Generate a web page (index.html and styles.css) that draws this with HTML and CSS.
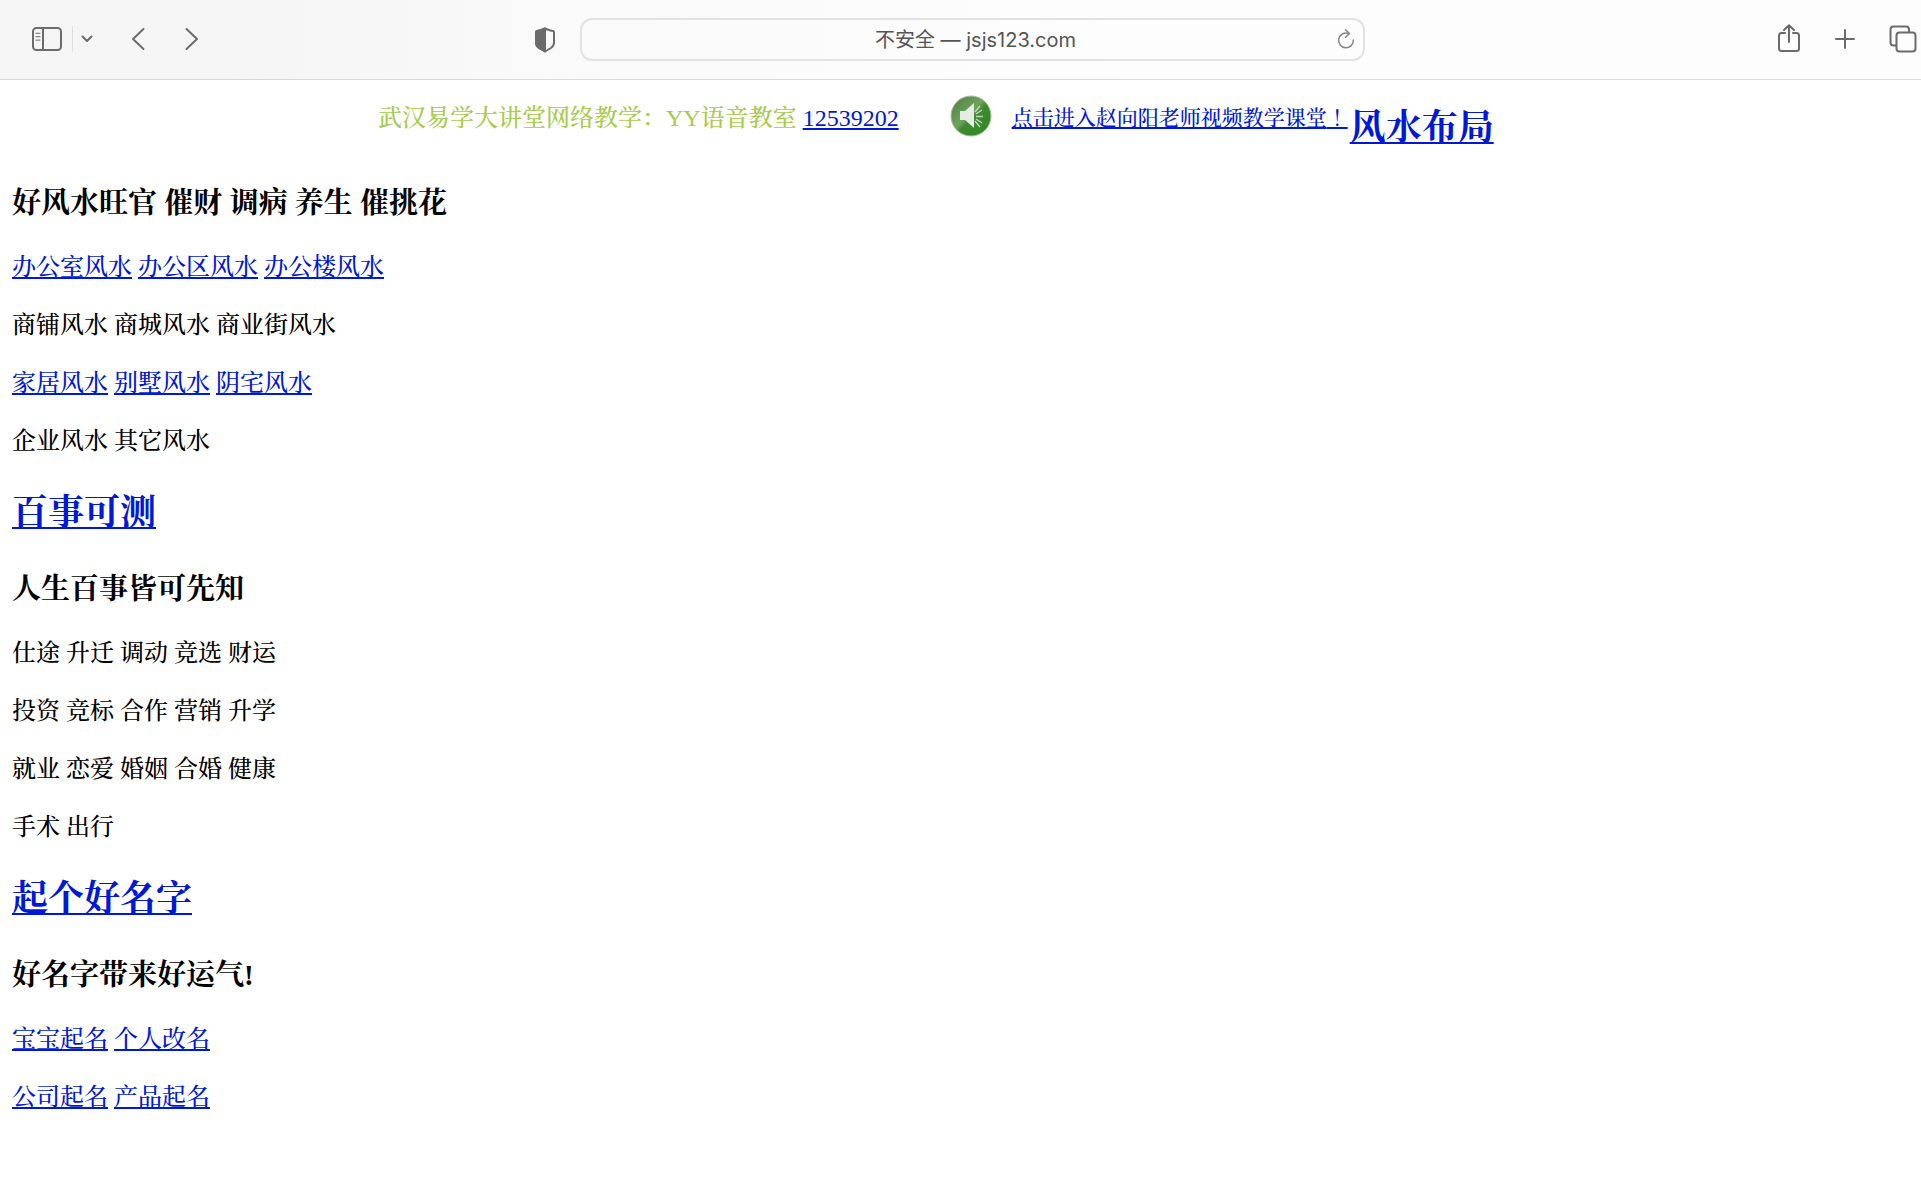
FILE: index.html
```html
<!DOCTYPE html>
<html lang="zh-CN">
<head>
<meta charset="utf-8">
<title>jsjs123.com</title>
<link rel="stylesheet" href="styles.css">
</head>
<body>
<header class="toolbar">
  <div class="tools-left">
    <button class="tool" type="button" aria-label="边栏">
      <svg width="30" height="24" viewBox="0 0 30 24"><rect x="1" y="1" width="28" height="22" rx="3.5"/><path d="M11 1v22"/><path class="thin" d="M4 6.300h4M4 9.700h4M4 13.100h4"/></svg>
    </button>
    <span class="divider"></span>
    <button class="tool tool-menu" type="button" aria-label="标签页组">
      <svg width="12" height="8" viewBox="0 0 12 8"><path d="M1.500 1.500L6 6l4.500-4.500"/></svg>
    </button>
    <button class="tool tool-back" type="button" aria-label="后退">
      <svg width="14" height="24" viewBox="0 0 14 24"><path d="M12.500 2L2 12l10.500 10"/></svg>
    </button>
    <button class="tool tool-forward" type="button" aria-label="前进">
      <svg width="14" height="24" viewBox="0 0 14 24"><path d="M1.500 2L12 12 1.500 22"/></svg>
    </button>
  </div>
  <div class="location">
    <button class="tool" type="button" aria-label="隐私报告">
      <svg width="22" height="26" viewBox="0 0 22 26"><path d="M11 1.500c3 1.200 5.500 2.200 8 2.600q1 .2 1 1.200v10.200q0 3.500-3 5.500l-6 3.500-6-3.500q-3-2-3-5.500V5.300q0-1 1-1.200c2.500-.4 5-1.400 8-2.600z"/><path class="solid" d="M11 1.500v23l-6-3.500q-3-2-3-5.500V5.300q0-1 1-1.200c2.500-.4 5-1.400 8-2.600z"/></svg>
    </button>
    <div class="address">
      <input class="address-input" type="text" aria-label="地址" value="不安全 — jsjs123.com">
      <button class="tool reload" type="button" aria-label="重新载入">
        <svg width="18" height="22" viewBox="0 0 18 22"><path d="M11 4.200A7.400 7.400 0 1 0 16.400 11"/><path d="M8.500 .8l4 3.700-4 3.700"/></svg>
      </button>
    </div>
  </div>
  <div class="tools-right">
    <button class="tool" type="button" aria-label="共享">
      <svg width="24" height="30" viewBox="0 0 24 30"><path d="M8 9H4.500Q2 9 2 11.500v13Q2 27 4.500 27h15q2.500 0 2.500-2.500v-13Q22 9 19.500 9H16M12 18V1.500M7 6L12 1.300l5 4.700"/></svg>
    </button>
    <button class="tool" type="button" aria-label="新标签页">
      <svg width="20" height="20" viewBox="0 0 20 20"><path d="M10 1v18M1 10h18"/></svg>
    </button>
    <button class="tool" type="button" aria-label="标签页概览">
      <svg width="28" height="28" viewBox="0 0 28 28"><path d="M7 20.500H4.500Q1.500 20.500 1.500 17.500v-13Q1.500 1.500 4.500 1.500h12.500q3 0 3 3V7"/><rect x="7.500" y="7.500" width="19" height="19" rx="3"/></svg>
    </button>
  </div>
</header>
<main class="page">
  <div class="banner">
    <p class="notice">武汉易学大讲堂网络教学：YY语音教室 <a href="#">12539202</a></p>
    <svg class="speaker" width="42" height="42" viewBox="0 0 42 42" aria-hidden="true">
      <defs>
        <linearGradient id="ball" x1="0" y1="0" x2="1" y2="1"><stop offset="0" stop-color="#4d7a45"/><stop offset=".45" stop-color="#6da45b"/><stop offset=".55" stop-color="#3d8a30"/><stop offset="1" stop-color="#2f8a22"/></linearGradient>
      </defs>
      <circle cx="21" cy="21" r="20" fill="url(#ball)" stroke="#a9bda4" stroke-width="1"/>
      <path fill="#e6ebe4" d="M10 16h5l9-8v25l-9-8h-5z"/>
      <path stroke="#c0d5b7" stroke-width="1.500" fill="none" d="M25 17l5-6M26 19l6-4M26 21.500h7M26 24l6 4M25 26l5 6"/>
    </svg>
    <a class="classroom" href="#">点击进入赵向阳老师视频教学课堂<span lang="zh-TW">！</span></a>
    <h2 class="banner-title"><a href="#">风水布局</a></h2>
  </div>
  <section>
    <h3>好风水旺官 催财 调病 养生 催挑花</h3>
    <p><a href="#">办公室风水</a> <a href="#">办公区风水</a> <a href="#">办公楼风水</a></p>
    <p>商铺风水 商城风水 商业街风水</p>
    <p><a href="#">家居风水</a> <a href="#">别墅风水</a> <a href="#">阴宅风水</a></p>
    <p>企业风水 其它风水</p>
  </section>
  <section>
    <h2><a href="#">百事可测</a></h2>
    <h3>人生百事皆可先知</h3>
    <p>仕途 升迁 调动 竞选 财运</p>
    <p>投资 竞标 合作 营销 升学</p>
    <p>就业 恋爱 婚姻 合婚 健康</p>
    <p>手术 出行</p>
  </section>
  <section>
    <h2><a href="#">起个好名字</a></h2>
    <h3>好名字带来好运气!</h3>
    <p><a href="#">宝宝起名</a> <a href="#">个人改名</a></p>
    <p><a href="#">公司起名</a> <a href="#">产品起名</a></p>
  </section>
</main>
</body>
</html>
```
FILE: styles.css
```css
body {
  margin: 0;
  background: #fff;
  color: #000;
  font-family: "Liberation Serif", "Songti SC", "Noto Serif CJK SC", "Noto Sans CJK SC", serif;
  font-size: 24px;
  font-weight: 500;
  line-height: 34px;
}

a {
  color: #0018d8;
  text-decoration: underline;
  text-decoration-thickness: 2px;
  text-underline-offset: 2px;
  text-decoration-skip-ink: none;
}

/* Browser toolbar */
.toolbar {
  display: flex;
  align-items: center;
  box-sizing: border-box;
  height: 80px;
  border-bottom: 1px solid #d9d9d9;
  background: linear-gradient(90deg, #f5f5f6 0, #f5f5f6 12%, #fafafb 30%, #fdfdfd 60%);
}

.tool {
  display: flex;
  flex: none;
  padding: 0;
  border: 0;
  background: none;
}

.tool svg {
  fill: none;
  stroke: #6b6b6b;
  stroke-width: 2;
  stroke-linecap: round;
  stroke-linejoin: round;
}

.tool svg .thin {
  stroke-width: 1;
}

.tool svg .solid {
  fill: #6b6b6b;
}

.tools-left {
  display: flex;
  flex: 0 0 502px;
  align-items: center;
  padding: 0 0 2px 32px;
}

.divider {
  width: 1px;
  height: 26px;
  margin: 0 8px 0 10px;
  background: #dedede;
}

.tool-back {
  margin: 0 40px 0 38px;
}

.location {
  display: flex;
  flex: 1;
  align-items: center;
  gap: 24px;
  min-width: 0;
}

.address {
  display: flex;
  flex: 1;
  align-items: center;
  box-sizing: border-box;
  height: 43px;
  min-width: 0;
  padding: 0 8px 0 32px;
  border: 2px solid #e2e2e4;
  border-radius: 12px;
}

.address-input {
  flex: 1;
  min-width: 0;
  padding: 0;
  border: 0;
  outline: 0;
  background: none;
  color: #555;
  font-family: Inter, "Noto Sans CJK SC", sans-serif;
  font-size: 20px;
  line-height: 28px;
  text-align: center;
}

.tool.reload svg {
  stroke: #858585;
  stroke-width: 1.5;
}

.tools-right {
  display: flex;
  flex: 0 0 552px;
  align-items: center;
  justify-content: flex-end;
  gap: 34px;
  padding: 0 4px 2px 0;
}

/* Page content */
.page {
  padding: 0 12px 48px;
}

.page h2 {
  margin: 30px 0;
  font-size: 36px;
  font-weight: 700;
  line-height: 50px;
}

.page h3 {
  margin: 26px 0;
  font-size: 29px;
  font-weight: 700;
  line-height: 42px;
}

.page p {
  margin: 24px 0;
}

.banner {
  display: flex;
  align-items: flex-start;
  padding: 15px 0 3px 366px;
  white-space: nowrap;
}

.page .notice {
  margin: 6px 0 0;
  color: #a6cb4b;
}

.speaker {
  flex: none;
  margin: 0 20px 0 51px;
}

.classroom {
  margin-top: 6px;
  font-size: 21px;
}

.page .banner-title {
  margin: 8px 0 0 2px;
}
```
